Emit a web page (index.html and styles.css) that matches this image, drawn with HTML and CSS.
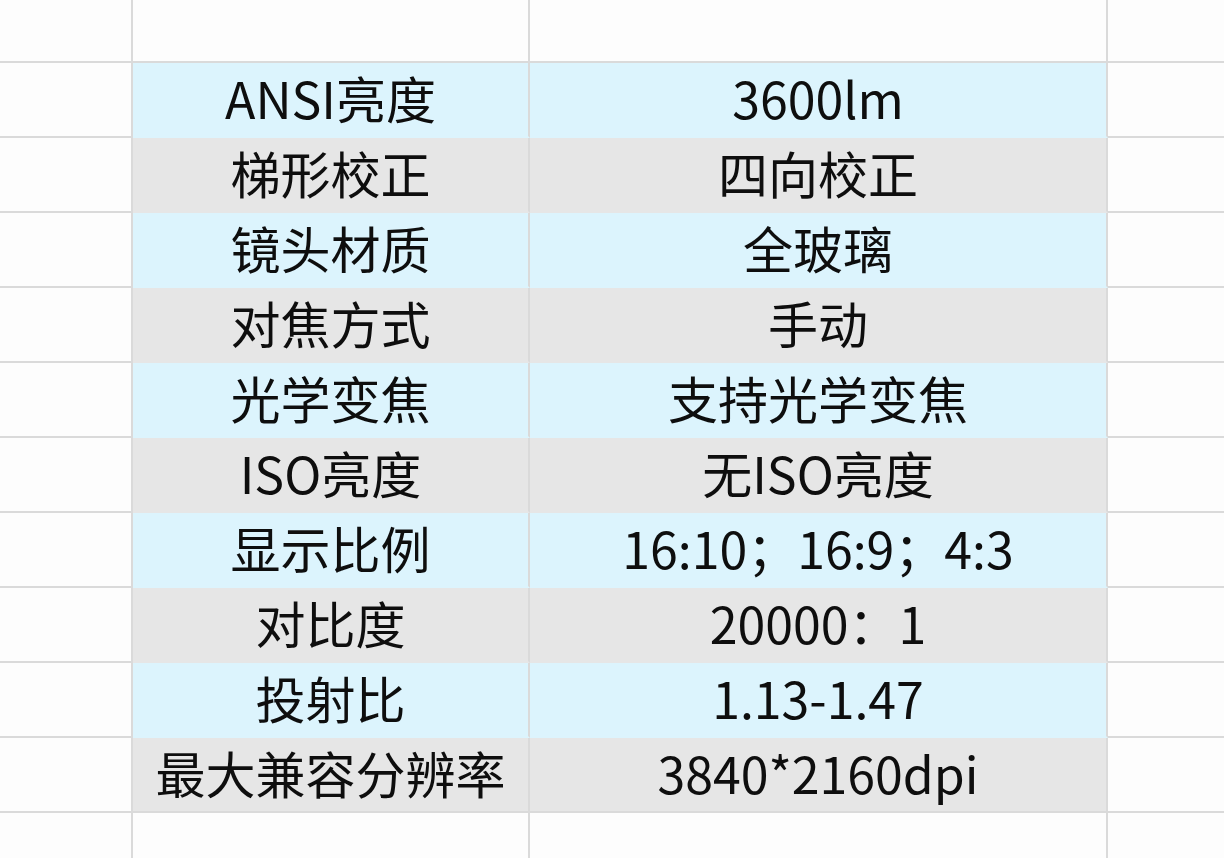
FILE: index.html
```html
<!DOCTYPE html>
<html lang="zh-CN">
<head>
<meta charset="utf-8">
<link rel="stylesheet" href="styles.css">
</head>
<body>
<div class="sheet">
  <div class="cell head"></div><div class="cell head"></div><div class="cell head"></div><div class="cell head last"></div>

  <div class="cell side"></div><div class="cell blue">ANSI亮度</div><div class="cell blue">3600lm</div><div class="cell side last"></div>
  <div class="cell side"></div><div class="cell gray">梯形校正</div><div class="cell gray">四向校正</div><div class="cell side last"></div>
  <div class="cell side"></div><div class="cell blue">镜头材质</div><div class="cell blue">全玻璃</div><div class="cell side last"></div>
  <div class="cell side"></div><div class="cell gray">对焦方式</div><div class="cell gray">手动</div><div class="cell side last"></div>
  <div class="cell side"></div><div class="cell blue">光学变焦</div><div class="cell blue">支持光学变焦</div><div class="cell side last"></div>
  <div class="cell side"></div><div class="cell gray">ISO亮度</div><div class="cell gray">无ISO亮度</div><div class="cell side last"></div>
  <div class="cell side"></div><div class="cell blue">显示比例</div><div class="cell blue">16:10；16:9；4:3</div><div class="cell side last"></div>
  <div class="cell side"></div><div class="cell gray">对比度</div><div class="cell gray">20000：1</div><div class="cell side last"></div>
  <div class="cell side"></div><div class="cell blue">投射比</div><div class="cell blue">1.13-1.47</div><div class="cell side last"></div>
  <div class="cell side"></div><div class="cell gray endrow">最大兼容分辨率</div><div class="cell gray endrow">3840*2160dpi</div><div class="cell side last"></div>

  <div class="cell foot"></div><div class="cell foot"></div><div class="cell foot"></div><div class="cell foot last"></div>
</div>
</body>
</html>
```
FILE: styles.css
```css
html, body {
  margin: 0;
  padding: 0;
  background: #fdfdfd;
}
body {
  width: 1224px;
  height: 858px;
  overflow: hidden;
  font-family: "Noto Sans CJK SC", "Noto Sans", sans-serif;
  color: #0e0e0e;
}
.sheet {
  display: grid;
  grid-template-columns: 133px 397px 578px 116px;
  grid-template-rows: 63px repeat(10, 75px) 60px;
}
.cell {
  box-sizing: border-box;
  border-right: 2px solid #dadada;
  border-bottom: 2px solid #dadada;
  display: flex;
  align-items: center;
  justify-content: center;
  font-size: 50px;
  line-height: 1;
  white-space: nowrap;
  background: #fdfdfd;
}
.cell.last {
  border-right: none;
}
.cell.blue, .cell.gray {
  padding-bottom: 5px;
}
.cell.blue {
  background: #dcf4fd;
  border-bottom-color: #dcf4fd;
}
.cell.gray {
  background: #e6e6e6;
  border-bottom-color: #e6e6e6;
}
.cell.gray.endrow {
  border-bottom-color: #dadada;
}
.cell.foot {
  border-bottom: none;
}
```
